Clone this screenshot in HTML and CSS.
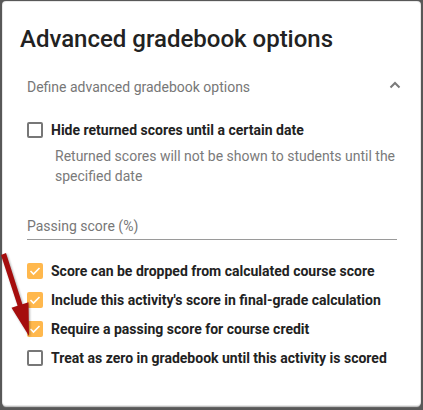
FILE: index.html
```html
<!DOCTYPE html>
<html>
<head>
<meta charset="utf-8">
<link rel="stylesheet" href="styles.css">
</head>
<body>
<div class="frame">
  <div class="card">
    <h1 class="title">Advanced gradebook options</h1>
    <div class="section">
      <div class="section-head">
        <span class="section-label">Define advanced gradebook options</span>
        <svg class="chevron" width="12" height="8" viewBox="0 0 12 8"><path d="M1.5 6.5 L6 2 L10.5 6.5" fill="none" stroke="#7a7a7a" stroke-width="2"/></svg>
      </div>
      <label class="check-row first">
        <span class="box"></span>
        <span class="label">Hide returned scores until a certain date</span>
      </label>
      <p class="desc">Returned scores will not be shown to students until the specified date</p>
      <div class="field">Passing score (%)</div>
      <div class="checks">
        <label class="check-row"><span class="box on"><svg width="12" height="10" viewBox="0 0 12 10"><path d="M1.5 5 L4.5 8 L10.5 2" fill="none" stroke="#fff" stroke-width="1.6"/></svg></span><span class="label">Score can be dropped from calculated course score</span></label>
        <label class="check-row"><span class="box on"><svg width="12" height="10" viewBox="0 0 12 10"><path d="M1.5 5 L4.5 8 L10.5 2" fill="none" stroke="#fff" stroke-width="1.6"/></svg></span><span class="label">Include this activity's score in final-grade calculation</span></label>
        <label class="check-row"><span class="box on"><svg width="12" height="10" viewBox="0 0 12 10"><path d="M1.5 5 L4.5 8 L10.5 2" fill="none" stroke="#fff" stroke-width="1.6"/></svg></span><span class="label">Require a passing score for course credit</span></label>
        <label class="check-row"><span class="box"></span><span class="label">Treat as zero in gradebook until this activity is scored</span></label>
      </div>
    </div>
  </div>
  <svg class="arrow" width="40" height="90" viewBox="0 0 40 90">
    <path d="M1 3 L6 1 L22.4 52.2 L28.5 50.3 L29 84 L11.5 55.7 L17.6 53.8 Z" fill="#a50d0d"/>
  </svg>
</div>
</body>
</html>
```
FILE: styles.css
```css
html, body {
  margin: 0;
  padding: 0;
  background: #585858;
}
.frame {
  position: relative;
  width: 423px;
  height: 410px;
  padding: 2px 3px 5px 3px;
  box-sizing: border-box;
}
.card {
  background: #fff;
  height: 403px;
  border-radius: 3px;
  box-shadow: 0 0 0 1px #e8e8e8, 0 2px 1px #cfcfcf;
  padding: 0 23px 0 17px;
  box-sizing: border-box;
  font-family: Roboto, "Liberation Sans", sans-serif;
  overflow: hidden;
}
.title {
  margin: 0;
  padding-top: 23px;
  font-size: 24px;
  line-height: 28px;
  font-weight: 500;
  color: #222;
}
.section {
  margin-left: 7px;
  padding-top: 24px;
}
.section-head {
  display: flex;
  align-items: center;
  justify-content: space-between;
  height: 20px;
}
.section-label {
  font-size: 14px;
  color: #777;
}
.chevron {
  margin-right: -4px;
  margin-top: -4px;
}
.check-row {
  display: flex;
  align-items: center;
  gap: 8px;
  height: 20px;
}
.check-row.first {
  margin-top: 23px;
}
.box {
  width: 16px;
  height: 16px;
  box-sizing: border-box;
  border: 2px solid #777;
  border-radius: 2px;
  display: flex;
  align-items: center;
  justify-content: center;
  flex: none;
}
.box.on {
  background: #ffb84d;
  border: none;
}
.label {
  font-size: 14px;
  font-weight: 700;
  color: #222;
}
.desc {
  margin: 6px 0 0 28px;
  font-size: 14px;
  line-height: 20px;
  color: #7a7a7a;
}
.field {
  margin-top: 30px;
  font-size: 14px;
  color: #777;
  line-height: 20px;
  padding-bottom: 3px;
  border-bottom: 1px solid #9a9a9a;
}
.checks {
  margin-top: 21px;
  display: flex;
  flex-direction: column;
  gap: 9px;
}
.arrow {
  position: absolute;
  left: 0;
  top: 252px;
  filter: drop-shadow(1px 1px 1px rgba(0,0,0,0.35));
}
```
